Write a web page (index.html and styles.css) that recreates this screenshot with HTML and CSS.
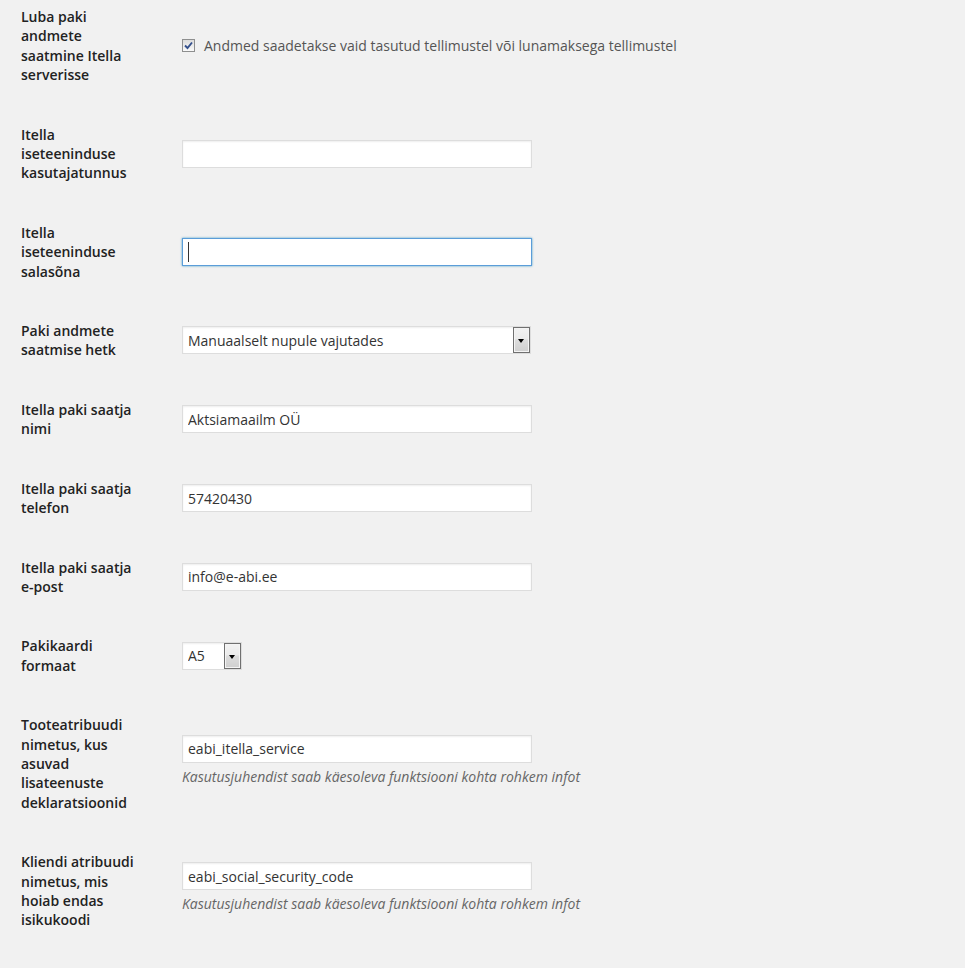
FILE: index.html
```html
<!DOCTYPE html>
<html lang="et">
<head>
  <meta charset="UTF-8" />
  <title>Itella seaded</title>
  <link rel="stylesheet" href="styles.css">
</head>
<body>
  <div class="wrap">
    <table class="form-table">
      <tr>
        <th>Luba paki andmete saatmine Itella serverisse</th>
        <td>
          <label class="check">
            <span class="box checked">
              <svg width="9" height="9" viewBox="0 0 9 9"><path d="M1 4.5 L3.5 7 L8 1.5" fill="none" stroke="#34508c" stroke-width="1.9"/></svg>
            </span>
            Andmed saadetakse vaid tasutud tellimustel või lunamaksega tellimustel
          </label>
        </td>
      </tr>
      <tr>
        <th>Itella iseteeninduse kasutajatunnus</th>
        <td><input class="regular-text" type="text" value=""></td>
      </tr>
      <tr>
        <th>Itella iseteeninduse salasõna</th>
        <td>
          <div class="field">
            <input class="regular-text focused" type="password" value="">
            <span class="caret"></span>
          </div>
        </td>
      </tr>
      <tr>
        <th>Paki andmete saatmise hetk</th>
        <td>
          <div class="select wide">
            <select><option>Manuaalselt nupule vajutades</option></select>
            <span class="arrow"></span>
          </div>
        </td>
      </tr>
      <tr>
        <th>Itella paki saatja nimi</th>
        <td><input class="regular-text" type="text" value="Aktsiamaailm OÜ"></td>
      </tr>
      <tr>
        <th>Itella paki saatja telefon</th>
        <td><input class="regular-text" type="text" value="57420430"></td>
      </tr>
      <tr>
        <th>Itella paki saatja e-post</th>
        <td><input class="regular-text" type="text" value="info@e-abi.ee"></td>
      </tr>
      <tr>
        <th>Pakikaardi formaat</th>
        <td>
          <div class="select narrow">
            <select><option>A5</option></select>
            <span class="arrow"></span>
          </div>
        </td>
      </tr>
      <tr>
        <th>Tooteatribuudi nimetus, kus asuvad lisateenuste deklaratsioonid</th>
        <td>
          <input class="regular-text" type="text" value="eabi_itella_service">
          <p class="description">Kasutusjuhendist saab käesoleva funktsiooni kohta rohkem infot</p>
        </td>
      </tr>
      <tr>
        <th>Kliendi atribuudi nimetus, mis hoiab endas isikukoodi</th>
        <td>
          <input class="regular-text" type="text" value="eabi_social_security_code">
          <p class="description">Kasutusjuhendist saab käesoleva funktsiooni kohta rohkem infot</p>
        </td>
      </tr>
    </table>
  </div>
</body>
</html>
```

FILE: styles.css
```css
body {
  margin: 0;
  padding: 0;
  background: #f1f1f1;
  font-family: "Open Sans", "Noto Sans", sans-serif;
  font-size: 14px;
  color: #444;
}

.wrap {
  padding-left: 21px;
  margin-top: -13px;
}

.form-table {
  border-collapse: collapse;
}

.form-table th {
  width: 122px;
  padding: 20px 29px 20px 0;
  text-align: left;
  vertical-align: top;
  font-weight: 600;
  line-height: 19.4px;
  color: #222;
}

.form-table td {
  padding: 15px 0 15px 10px;
  vertical-align: middle;
  line-height: 19.4px;
}

.check {
  display: flex;
  align-items: center;
  gap: 9px;
  color: #555;
}

.box {
  width: 11px;
  height: 11px;
  border: 1px solid #8e8f8f;
  background: linear-gradient(#dcdcdc, #fafafa);
  display: flex;
  align-items: center;
  justify-content: center;
}

.regular-text {
  box-sizing: border-box;
  width: 350px;
  height: 28px;
  margin: 0;
  padding: 3px 5px;
  border: 1px solid #ddd;
  background: #fff;
  box-shadow: inset 0 1px 2px rgba(0, 0, 0, .07);
  font-family: inherit;
  font-size: 14px;
  color: #333;
  outline: none;
  display: block;
}

.regular-text.focused {
  border-color: #5b9dd9;
  box-shadow: 0 0 2px rgba(30, 140, 190, .8);
}

.field {
  position: relative;
  width: 350px;
}

.caret {
  position: absolute;
  left: 6px;
  top: 4px;
  width: 1px;
  height: 20px;
  background: #333;
}

.select {
  position: relative;
  height: 28px;
}

.select.wide {
  width: 349px;
}

.select.narrow {
  width: 60px;
}

.select select {
  box-sizing: border-box;
  appearance: none;
  -webkit-appearance: none;
  width: 100%;
  height: 28px;
  margin: 0;
  padding: 0 5px;
  border: 1px solid #ddd;
  border-radius: 0;
  background: #fff;
  box-shadow: inset 0 1px 2px rgba(0, 0, 0, .07);
  font-family: inherit;
  font-size: 14px;
  color: #333;
}

.arrow {
  position: absolute;
  right: 1px;
  top: 1px;
  box-sizing: border-box;
  width: 17px;
  height: 26px;
  border: 1px solid #707070;
  box-shadow: inset 0 0 0 1px #f4f4f4;
  background: linear-gradient(#f2f2f2 0%, #ebebeb 45%, #dddddd 50%, #cfcfcf 100%);
  pointer-events: none;
}

.arrow::after {
  content: "";
  position: absolute;
  left: 4px;
  top: 11px;
  border-left: 3.5px solid transparent;
  border-right: 3.5px solid transparent;
  border-top: 4px solid #000;
}

.description {
  margin: 4px 0 6px;
  font-size: 14px;
  font-style: italic;
  color: #666;
  line-height: 19.4px;
}
```
